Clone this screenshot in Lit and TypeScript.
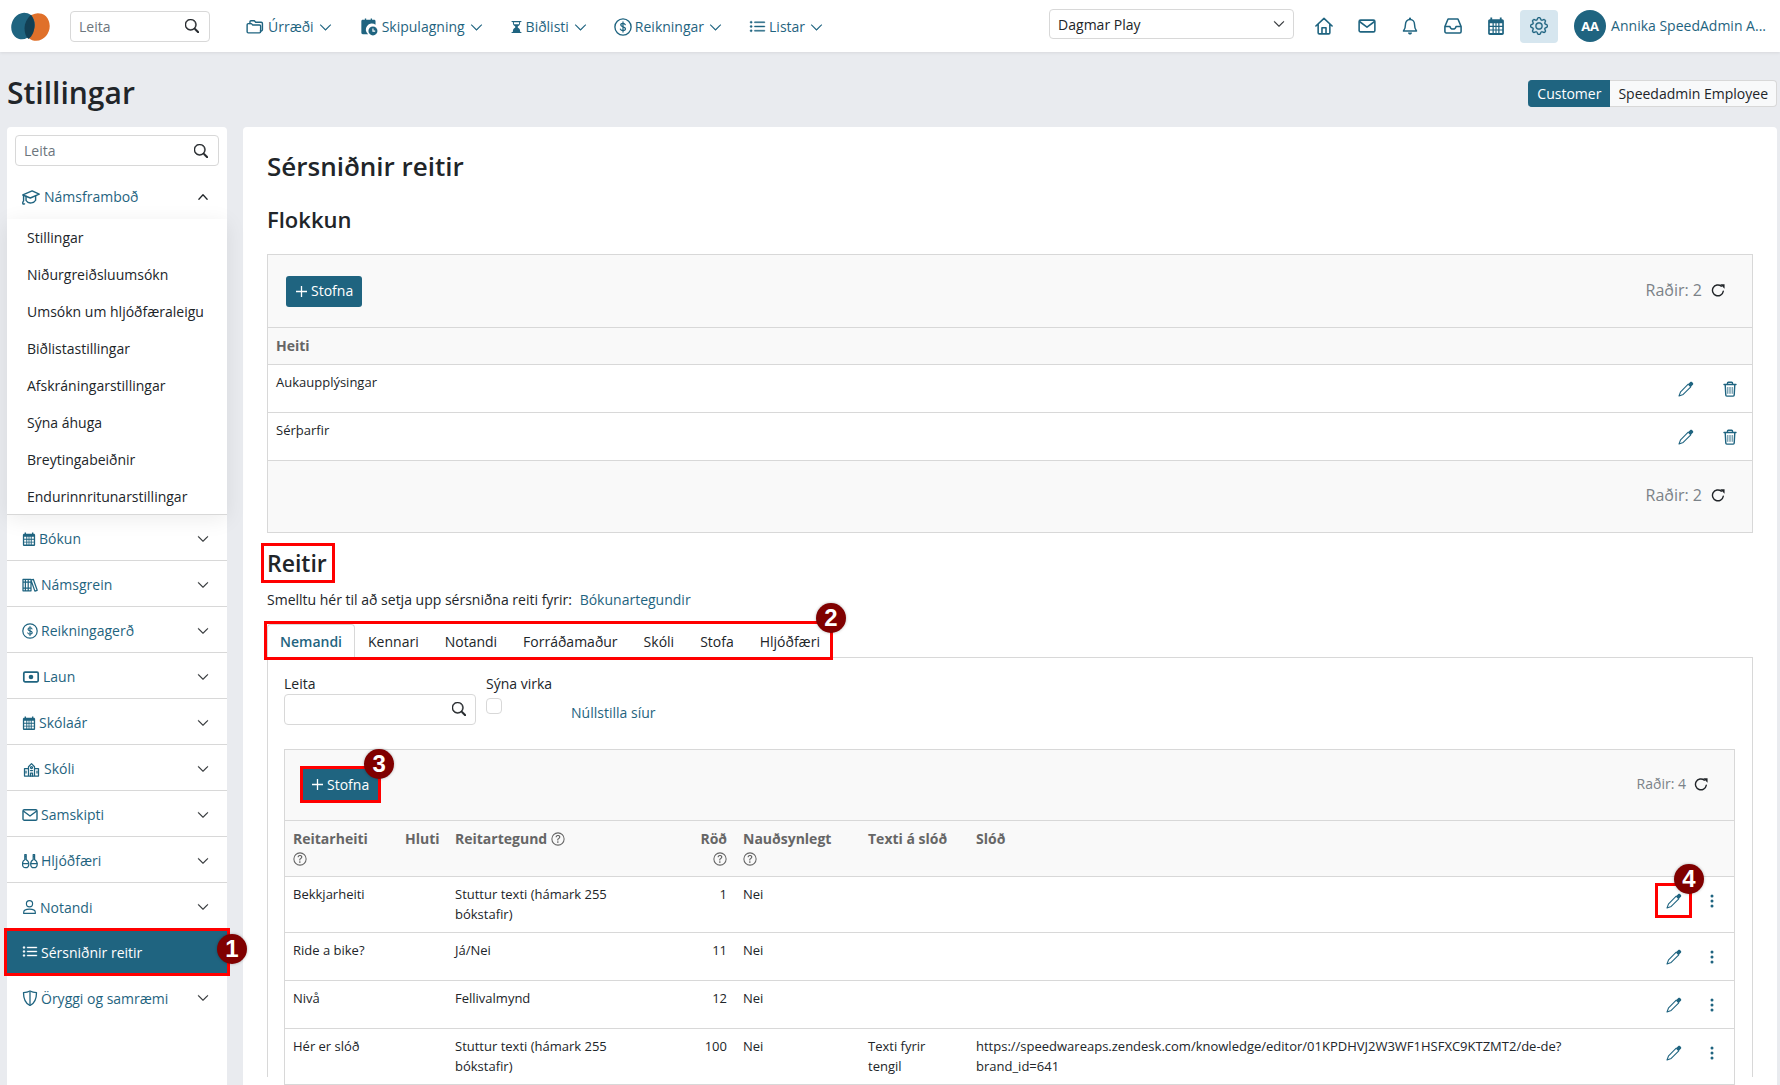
import { LitElement, html, css, svg } from "lit";
import { customElement } from "lit/decorators.js";

const line = (content: unknown) => svg`<g fill="none" stroke="currentColor" stroke-width="1.25" stroke-linecap="round" stroke-linejoin="round">${content}</g>`;

const ICONS: Record<string, unknown> = {
	search: svg`<path fill="currentColor" stroke="currentColor" stroke-width=".6" d="M11.742 10.344a6.5 6.5 0 1 0-1.397 1.398h-.001c.03.04.062.078.098.115l3.85 3.85a1 1 0 0 0 1.415-1.414l-3.85-3.85a1.007 1.007 0 0 0-.115-.1zM12 6.5a5.5 5.5 0 1 1-11 0 5.5 5.5 0 0 1 11 0z"/>`,
	down: svg`<path fill="currentColor" stroke="currentColor" stroke-width=".6" d="M1.646 4.646a.5.5 0 0 1 .708 0L8 10.293l5.646-5.647a.5.5 0 0 1 .708.708l-6 6a.5.5 0 0 1-.708 0l-6-6a.5.5 0 0 1 0-.708z"/>`,
	up: svg`<path fill="none" stroke="currentColor" stroke-width="1.7" stroke-linecap="round" stroke-linejoin="round" d="M2.5 11 8 5l5.5 6"/>`,
	list: svg`<path fill="currentColor" stroke="currentColor" stroke-width=".4" d="M5 11.5a.5.5 0 0 1 .5-.5h9a.5.5 0 0 1 0 1h-9a.5.5 0 0 1-.5-.5zm0-4a.5.5 0 0 1 .5-.5h9a.5.5 0 0 1 0 1h-9a.5.5 0 0 1-.5-.5zm0-4a.5.5 0 0 1 .5-.5h9a.5.5 0 0 1 0 1h-9a.5.5 0 0 1-.5-.5zm-3 1a1 1 0 1 0 0-2 1 1 0 0 0 0 2zm0 4a1 1 0 1 0 0-2 1 1 0 0 0 0 2zm0 4a1 1 0 1 0 0-2 1 1 0 0 0 0 2z"/>`,
	hourglass: svg`<path fill="currentColor" d="M2.5 15.5a.7.7 0 1 1 0-1.4h1V13a4.5 4.5 0 0 1 2.557-4.06c.29-.139.443-.377.443-.59v-.7c0-.213-.154-.451-.443-.59A4.5 4.5 0 0 1 3.5 3V1.9h-1a.7.7 0 0 1 0-1.4h11a.7.7 0 0 1 0 1.4h-1V3a4.5 4.5 0 0 1-2.557 4.06c-.29.139-.443.377-.443.59v.7c0 .213.154.451.443.59A4.5 4.5 0 0 1 12.5 13v1.100h1a.7.7 0 0 1 0 1.4zM4.800 2v1c0 .537.12 1.045.337 1.5h5.726c.216-.455.337-.963.337-1.500V2z"/><path fill="currentColor" d="M4.800 14v-1c0-1.400.8-2.700 2-3.300l1.200-.7 1.200.7c1.200.6 2 1.900 2 3.300v1z"/>`,
	gear: svg`<path fill="currentColor" stroke="currentColor" stroke-width=".25" d="M8 4.754a3.246 3.246 0 1 0 0 6.492 3.246 3.246 0 0 0 0-6.492zM5.754 8a2.246 2.246 0 1 1 4.492 0 2.246 2.246 0 0 1-4.492 0z"/><path fill="currentColor" stroke="currentColor" stroke-width=".25" d="M9.796 1.343c-.527-1.79-3.065-1.79-3.592 0l-.094.319a.873.873 0 0 1-1.255.52l-.292-.16c-1.64-.892-3.433.902-2.54 2.541l.159.292a.873.873 0 0 1-.52 1.255l-.319.094c-1.79.527-1.79 3.065 0 3.592l.319.094a.873.873 0 0 1 .52 1.255l-.16.292c-.892 1.64.901 3.434 2.541 2.54l.292-.159a.873.873 0 0 1 1.255.52l.094.319c.527 1.79 3.065 1.79 3.592 0l.094-.319a.873.873 0 0 1 1.255-.52l.292.16c1.64.893 3.434-.902 2.54-2.541l-.159-.292a.873.873 0 0 1 .52-1.255l.319-.094c1.79-.527 1.79-3.065 0-3.592l-.319-.094a.873.873 0 0 1-.52-1.255l.16-.292c.893-1.64-.902-3.433-2.541-2.54l-.292.159a.873.873 0 0 1-1.255-.52l-.094-.319zm-2.633.283c.246-.835 1.428-.835 1.674 0l.094.319a1.873 1.873 0 0 0 2.693 1.115l.291-.16c.764-.415 1.6.42 1.184 1.185l-.159.292a1.873 1.873 0 0 0 1.116 2.692l.318.094c.835.246.835 1.428 0 1.674l-.319.094a1.873 1.873 0 0 0-1.115 2.693l.16.291c.415.764-.42 1.6-1.185 1.184l-.291-.159a1.873 1.873 0 0 0-2.693 1.116l-.094.318c-.246.835-1.428.835-1.674 0l-.094-.319a1.873 1.873 0 0 0-2.692-1.115l-.292.16c-.764.415-1.6-.42-1.184-1.185l.159-.291A1.873 1.873 0 0 0 1.945 8.93l-.319-.094c-.835-.246-.835-1.428 0-1.674l.319-.094A1.873 1.873 0 0 0 3.06 4.377l-.16-.292c-.415-.764.42-1.6 1.185-1.184l.292.159a1.873 1.873 0 0 0 2.692-1.115l.094-.319z"/>`,
	help: svg`<circle cx="8" cy="8" r="7" fill="none" stroke="currentColor" stroke-width="1.2"/><path fill="currentColor" d="M5.255 5.786a.237.237 0 0 0 .241.247h.825c.138 0 .248-.113.266-.25.09-.656.54-1.134 1.342-1.134.686 0 1.314.343 1.314 1.168 0 .635-.374.927-.965 1.371-.673.489-1.206 1.06-1.168 1.987l.003.217a.25.25 0 0 0 .25.246h.811a.25.25 0 0 0 .25-.25v-.105c0-.718.273-.927 1.01-1.486.609-.463 1.244-.977 1.244-2.056 0-1.511-1.276-2.241-2.673-2.241-1.267 0-2.655.59-2.75 2.286zm1.557 5.763c0 .533.425.927 1.01.927.609 0 1.028-.394 1.028-.927 0-.552-.42-.94-1.029-.94-.584 0-1.009.388-1.009.94z"/>`,
	refresh: svg`<path fill="none" stroke="currentColor" stroke-width="1.6" stroke-linecap="round" d="M14 9.500A6.200 6.200 0 1 1 11.800 3.600"/><path fill="currentColor" d="M10.500 1.500h5v5z"/>`,
	pencil: svg`<g fill="none" stroke="currentColor" stroke-width="1.05" stroke-linecap="round" stroke-linejoin="round"><path d="M10.200 3.200 2.600 10.800 1 15l4.200-1.600 7.600-7.600"/></g><path fill="currentColor" d="M9.800 3.600 12.300 1.100c.5-.5 1.200-.5 1.700 0l.9.900c.5.500.5 1.200 0 1.700l-2.500 2.500z"/>`,
	trash: svg`<g fill="none" stroke="currentColor" stroke-width="1.4" stroke-linecap="round" stroke-linejoin="round"><path d="M2 3.500h12M5.500 3.300V2c0-.5.3-.8.8-.8h3.400c.5 0 .8.300.8.800v1.300M3.200 3.500l.6 10.600c0 .6.500 1 1 1h6.400c.5 0 1-.4 1-1l.6-10.600"/></g><path fill="none" stroke="currentColor" stroke-width="1" opacity=".65" d="M5.600 6v6.800M7.200 6v6.800M8.800 6v6.800M10.400 6v6.800"/>`,
	dots: svg`<path fill="currentColor" d="M9.500 13a1.500 1.500 0 1 1-3 0 1.500 1.500 0 0 1 3 0zm0-5a1.500 1.500 0 1 1-3 0 1.500 1.500 0 0 1 3 0zm0-5a1.500 1.500 0 1 1-3 0 1.500 1.500 0 0 1 3 0z"/>`,
	folders: line(svg`<path d="M3.500 5V3.400c0-.5.400-.9.900-.9h3l1.200 1.300h5c.6 0 1 .4 1 1v5.700c0 .6-.4 1-1 1h-.8"/><path d="M1 6c0-.6.400-1 1-1h2.800l1.200 1.200h6c.6 0 1 .4 1 1v5c0 .6-.4 1-1 1H2c-.6 0-1-.4-1-1z"/>`),
	planner: svg`<path fill="currentColor" d="M2.500 1.500h1.800V.5h1.200v1h4v-1h1.200v1h1.800c.8 0 1.300.5 1.300 1.300v3.300a5 5 0 0 0-6.600 8.400H2.500c-.8 0-1.300-.5-1.300-1.300V2.800c0-.8.500-1.300 1.300-1.300z"/><circle cx="11.500" cy="11.500" r="4" fill="currentColor"/><path stroke="#fff" stroke-width="1" fill="none" d="M11.500 9.300v2.400h2"/>`,
	dollar: svg`<circle cx="8" cy="8" r="7.200" fill="none" stroke="currentColor" stroke-width="1.2"/><path fill="none" stroke="currentColor" stroke-width="1.1" stroke-linecap="round" d="M10 5.900C9.600 5 8.900 4.800 8 4.800c-1.200 0-2 .6-2 1.500 0 2 4.200 1.100 4.200 3.300 0 1-.9 1.600-2.200 1.600-1.100 0-1.900-.4-2.300-1.300M8 3.500v9"/>`,
	house: svg`<g fill="none" stroke="currentColor" stroke-width="1.4" stroke-linecap="round" stroke-linejoin="round"><path d="M.8 8 8 1.200 15.200 8M2.800 6.300V14c0 .6.400 1 1 1h8.400c.6 0 1-.4 1-1V6.300M6.200 15V9.500h3.600V15"/></g>`,
	mail: svg`<g fill="none" stroke="currentColor" stroke-width="1.4" stroke-linejoin="round"><rect x="1" y="2.800" width="14" height="10.400" rx="1.300"/><path d="M1.300 4 8 9l6.700-5"/></g>`,
	bell: svg`<g fill="none" stroke="currentColor" stroke-width="1.3" stroke-linejoin="round"><path d="M8 2.200c-2.600 0-4 2-4 4.300 0 3-.8 4.700-1.800 6h11.600c-1-1.300-1.800-3-1.800-6 0-2.300-1.400-4.300-4-4.300z"/></g><circle cx="8" cy="1.500" r="1" fill="currentColor"/><path fill="currentColor" d="M6.200 13.800h3.600c0 1.100-.8 1.800-1.800 1.800s-1.800-.7-1.800-1.800z"/>`,
	inbox: svg`<g fill="none" stroke="currentColor" stroke-width="1.4" stroke-linecap="round" stroke-linejoin="round"><path d="M3.600 1.800h8.800l2.800 6.700v4.400c0 .7-.5 1.300-1.200 1.300H2c-.7 0-1.200-.6-1.200-1.300V8.500zM1 8.500h4.300c.3 1.500 1.300 2.200 2.700 2.200s2.400-.7 2.700-2.200H15"/></g>`,
	calendar: svg`<path fill="currentColor" fill-rule="evenodd" d="M3 .5h1.600v1.500h6.800V.5H13V2h.5c.8 0 1.500.7 1.500 1.500v11c0 .8-.7 1.500-1.500 1.500h-11C1.700 16 1 15.300 1 14.500v-11C1 2.700 1.700 2 2.500 2H3zM2.500 5.500v2.300h2.400V5.500zm3.500 0v2.300h1.500V5.500zm2.500 0v2.300H10V5.500zm2.600 0v2.300h2.400V5.500zM2.500 8.800v2.200h2.400V8.800zm3.500 0v2.200h1.500V8.800zm2.500 0v2.200H10V8.800zm2.600 0v2.200h2.400V8.800zM2.500 12v2.300h2.400V12zm3.500 0v2.300h1.500V12zm2.500 0v2.300H10V12zm2.600 0v2.300h2.400V12z"/>`,
	cap: line(svg`<path d="M.7 6.200 9 2.600l6.300 2.900-7.900 3.400z"/><path d="M3.600 7.300v3.800c1 1.700 2.900 2.400 4.800 2.100 1.700-.2 3-1 3.700-2.300V7"/><path d="M1.400 6.400v5.200M1.400 11.600c-.9.700-.9 2.200-.4 2.700.7 0 1-.1 1.200-.2"/>`),
	books: line(svg`<path d="M1 2.300h2.400v11.500H1zM3.400 2.300h2.800v11.500H3.400zM6.200 2.300h2.800v11.500H6.200zM9 3.200l2.300-.9 3.900 11-2.300.8zM1 5h8M1 11h8"/>`),
	cash: svg`<rect x=".8" y="3.200" width="14.400" height="9.600" rx="1.200" fill="none" stroke="currentColor" stroke-width="1.7"/><circle cx="8" cy="8" r="2.300" fill="currentColor"/>`,
	school: line(svg`<path d="M5 5.800 8 2.600l3 3.200V15H5zM5 7.500H1v7.500h4M11 7.500h4v7.500h-4"/><circle cx="8" cy="6.500" r="1"/><path d="M7 15v-3h2v3M2.500 10v2M13.500 10v2M7 9.600h2"/>`),
	instruments: line(svg`<path d="M2.800 1.500h1.400v5.200c1.300.6 2.600 2 2.600 4.200 0 2.300-1.300 3.800-3.300 3.800s-3-1.500-3-3.800c0-2.200 1-3.600 2.300-4.200zM11.200 1.500h1.400v5.200c1.300.6 2.600 2 2.600 4.200 0 2.300-1.300 3.800-3.300 3.800s-3.200-1.500-3.200-3.800c0-2.200 1.200-3.600 2.500-4.200zM2.800 3.500h1.400M11.200 3.500h1.400"/><path d="M1 10.500h5M9 10.500h6"/>`),
	person: line(svg`<circle cx="8" cy="4.500" r="3.300"/><path d="M1.800 14.800v-1.300c0-2.100 1.900-3.300 6.200-3.300s6.200 1.200 6.200 3.300v1.300z"/>`),
	shield: svg`<path fill="none" stroke="currentColor" stroke-width="1.3" stroke-linejoin="round" d="M8 1c2.200 1.100 4.300 1.500 6.500 1.700 0 6.500-1.500 10.500-6.500 12.800C3 13.200 1.500 9.200 1.500 2.700 3.700 2.500 5.800 2.100 8 1z"/><path fill="none" stroke="currentColor" stroke-width="1.3" d="M8 1.500v13.500"/>`,
};

const icon = (name: string, cls = "", w?: number) =>
	html`<svg class="ic ${cls}" style=${w ? `width:${w}px` : ""} viewBox="0 0 16 16" aria-hidden="true">${ICONS[name]}</svg>`;

const TOP_NAV = [
	{ ic: "folders", w: 20, label: "Úrræði" },
	{ ic: "planner", w: 20, label: "Skipulagning" },
	{ ic: "hourglass", w: 13, label: "Biðlisti" },
	{ ic: "dollar", w: 18, label: "Reikningar" },
	{ ic: "list", w: 17, label: "Listar" },
];
const TOP_ICONS = ["house", "mail", "bell", "inbox", "calendar", "gear"];
const SUB_ITEMS = [
	"Stillingar",
	"Niðurgreiðsluumsókn",
	"Umsókn um hljóðfæraleigu",
	"Biðlistastillingar",
	"Afskráningarstillingar",
	"Sýna áhuga",
	"Breytingabeiðnir",
	"Endurinnritunarstillingar",
];
const SIDE_ITEMS = [
	{ ic: "calendar", w: 14, label: "Bókun" },
	{ ic: "books", w: 16, label: "Námsgrein" },
	{ ic: "dollar", w: 16, label: "Reikningagerð" },
	{ ic: "cash", w: 18, label: "Laun" },
	{ ic: "calendar", w: 14, label: "Skólaár" },
	{ ic: "school", w: 19, label: "Skóli" },
	{ ic: "mail", w: 16, label: "Samskipti" },
	{ ic: "instruments", w: 16, label: "Hljóðfæri" },
	{ ic: "person", w: 15, label: "Notandi" },
];
const TABS = ["Nemandi", "Kennari", "Notandi", "Forráðamaður", "Skóli", "Stofa", "Hljóðfæri"];
const URL_TEXT = "https://speedwareaps.zendesk.com/knowledge/editor/01KPDHVJ2W3WF1HSFXC9KTZMT2/de-de?brand_id=641";
const FIELD_ROWS = [
	{ name: "Bekkjarheiti", type: "Stuttur texti (hámark 255 bókstafir)", order: "1", req: "Nei", text: "", url: "" },
	{ name: "Ride a bike?", type: "Já/Nei", order: "11", req: "Nei", text: "", url: "" },
	{ name: "Nivå", type: "Fellivalmynd", order: "12", req: "Nei", text: "", url: "" },
	{ name: "Hér er slóð", type: "Stuttur texti (hámark 255 bókstafir)", order: "100", req: "Nei", text: "Texti fyrir tengil", url: URL_TEXT },
];

@customElement("app-root")
export class AppRoot extends LitElement {
	static styles = css`
		:host {
			display: block;
			height: 1085px;
			overflow: hidden;
			background: #e9ebef;
			color: #212529;
			font-family: "Open Sans", sans-serif;
			font-size: 14px;
			--primary: #1f6480;
			--line: #d8d8d8;
		}
		* {
			box-sizing: border-box;
		}
		.ic {
			width: 16px;
			height: 16px;
			flex: none;
			display: block;
		}
		a {
			color: var(--primary);
		}

		/* Top bar */
		.topbar {
			height: 52px;
			background: #fff;
			display: flex;
			align-items: center;
			padding: 0 14px 0 11px;
			box-shadow: 0 1px 3px rgba(0, 0, 0, 0.08);
			position: relative;
		}
		.logo {
			width: 39px;
			height: 29px;
			flex: none;
		}
		.search {
			display: flex;
			align-items: center;
			background: #fff;
			border: 1px solid var(--line);
			border-radius: 4px;
			height: 31px;
			padding: 0 10px 0 8px;
		}
		.search input {
			border: 0;
			outline: 0;
			flex: 1;
			min-width: 0;
			padding: 0;
			font: inherit;
			color: #212529;
			background: none;
		}
		.search input::placeholder {
			color: #6c757d;
		}
		.search .ic {
			width: 14px;
			height: 14px;
			color: #212529;
		}
		.top-search {
			width: 140px;
			margin-left: 20px;
		}
		.top-nav {
			display: flex;
			margin-left: 35px;
			gap: 27px;
			padding-top: 2px;
		}
		.top-item {
			display: flex;
			align-items: center;
			gap: 3px;
			color: var(--primary);
			line-height: 20px;
		}
		.top-item .ic {
			height: 18px;
		}
		.top-item .chev {
			width: 13px;
			height: 13px;
			margin-left: 2px;
		}
		.top-right {
			margin-left: auto;
			display: flex;
			align-items: center;
		}
		.org {
			width: 245px;
			height: 30px;
			border: 1px solid var(--line);
			border-radius: 4px;
			display: flex;
			align-items: center;
			justify-content: space-between;
			padding: 0 8px;
			margin-right: 11px;
			margin-top: -4px;
		}
		.org .ic {
			width: 12px;
			height: 12px;
		}
		.top-icons {
			display: flex;
			gap: 5px;
		}
		.top-btn {
			width: 38px;
			height: 33px;
			border-radius: 4px;
			display: flex;
			align-items: center;
			justify-content: center;
			color: var(--primary);
		}
		.top-btn .ic {
			width: 18px;
			height: 18px;
		}
		.top-btn.on {
			background: #d6e6ef;
		}
		.avatar {
			width: 32px;
			height: 32px;
			border-radius: 50%;
			background: var(--primary);
			color: #fff;
			font-weight: 700;
			font-size: 13px;
			display: flex;
			align-items: center;
			justify-content: center;
			margin-left: 16px;
		}
		.user {
			color: var(--primary);
			margin: -2px 0 0 5px;
			white-space: nowrap;
		}

		/* Page title */
		.title-row {
			height: 75px;
			display: flex;
			align-items: center;
			justify-content: space-between;
			padding: 7px 3px 0 7px;
		}
		.title-row h1 {
			margin: 0;
			font-size: 30px;
			font-weight: 600;
			line-height: 36px;
			color: #212529;
		}
		.switch {
			display: flex;
			height: 27px;
			line-height: 25px;
		}
		.switch span {
			padding: 0 8px;
			border: 1px solid var(--line);
			background: #f8f9fa;
			border-radius: 0 4px 4px 0;
			border-left: 0;
		}
		.switch .on {
			background: var(--primary);
			border-color: var(--primary);
			color: #fff;
			border-radius: 4px 0 0 4px;
			font-weight: 500;
			padding-left: 9px;
		}

		.body {
			display: flex;
			gap: 16px;
			padding: 0 3px 0 7px;
		}

		/* Sidebar */
		.sidebar {
			width: 220px;
			flex: none;
			height: 958px;
			background: #fff;
			border-radius: 4px 4px 0 0;
		}
		.side-search {
			margin: 8px 8px 0;
		}
		.side-head {
			height: 53px;
			padding: 8px 18px 0 15px;
			display: flex;
			align-items: center;
			color: var(--primary);
			gap: 4px;
		}
		.side-head .ic:first-child {
			height: 18px;
		}
		.side-head .chev {
			margin-left: auto;
			width: 12px;
			height: 12px;
			color: #212529;
		}
		.sub {
			background: #fff;
			box-shadow: 0 4px 20px rgba(0, 0, 0, 0.08);
			border-bottom: 1px solid var(--line);
			height: 296px;
			position: relative;
		}
		.sub div {
			height: 37px;
			padding-left: 20px;
			display: flex;
			align-items: center;
		}
		.side-item {
			height: 46px;
			padding: 2px 18px 0 15px;
			display: flex;
			align-items: center;
			color: var(--primary);
			gap: 3px;
			border-bottom: 1px solid var(--line);
		}
		.side-item .chev {
			margin-left: auto;
			width: 12px;
			height: 12px;
			color: #212529;
		}
		.side-item.last {
			border-bottom: 0;
		}
		.side-item.active {
			background: var(--primary);
			color: #fff;
			height: 42px;
			border-bottom: 0;
			margin: 2px 0 1px;
			padding-top: 0;
		}

		/* Highlights */
		.mark {
			position: relative;
			outline: 3px solid #f00;
		}
		.badge {
			position: absolute;
			width: 30px;
			height: 30px;
			border-radius: 50%;
			background: #800000;
			color: #fff;
			font: 700 24px/30px "Liberation Sans", sans-serif;
			text-align: center;
			z-index: 2;
			box-shadow: 0 0 3px rgba(0, 0, 0, 0.3);
		}
		.badge-1 {
			right: -20px;
			top: 3px;
		}
		.badge-2 {
			right: -16px;
			top: -21px;
		}
		.badge-3 {
			right: -16px;
			top: -20px;
		}
		.badge-4 {
			right: -15px;
			top: -22px;
		}

		/* Main */
		.main {
			flex: 1;
			min-width: 0;
			height: 958px;
			background: #fff;
			border-radius: 4px 4px 0 0;
			padding: 25px 24px 0;
		}
		.main h2 {
			margin: 0;
			font-size: 26px;
			line-height: 29px;
			font-weight: 600;
		}
		.main h3 {
			margin: 25px 0 22px;
			font-size: 22px;
			line-height: 26px;
			font-weight: 600;
		}
		.panel {
			border: 1px solid var(--line);
		}
		.bar {
			height: 72px;
			background: #f9f9f9;
			display: flex;
			align-items: center;
			justify-content: space-between;
			padding: 0 27px 0 18px;
		}
		.btn {
			display: inline-flex;
			align-items: center;
			gap: 3px;
			height: 31px;
			padding: 0 9px;
			background: var(--primary);
			color: #fff;
			border-radius: 3px;
			line-height: 1;
		}
		.btn.mark {
			border-radius: 0;
			padding-left: 8px;
			margin-left: 1px;
		}
		.btn svg {
			width: 13px;
			height: 13px;
		}
		.count {
			display: flex;
			align-items: center;
			gap: 9px;
			color: #7b8288;
			font-size: 16px;
			margin-top: -2px;
		}
		.count .ic {
			width: 14px;
			height: 14px;
			color: #212529;
		}
		table {
			width: 100%;
			border-collapse: collapse;
			table-layout: fixed;
			font-size: 13px;
			line-height: 20px;
		}
		th {
			background: #f9f9f9;
			border-top: 1px solid var(--line);
			color: #666;
			font-weight: 700;
			text-align: left;
			padding: 8px;
			vertical-align: top;
			font-size: 14px;
		}
		td {
			border-top: 1px solid var(--line);
			padding: 8px;
			vertical-align: top;
		}
		.simple td {
			height: 47.5px;
			padding-top: 7px;
		}
		.simple td.acts {
			padding: 16px 0 0;
		}
		.acts-in {
			display: flex;
			justify-content: flex-end;
			gap: 28px;
			padding-right: 14px;
			color: var(--primary);
		}
		.bar.foot {
			border-top: 1px solid var(--line);
			height: 72px;
			justify-content: flex-end;
		}
		.reitir {
			display: inline-block;
			margin: 13px 0 0 -3px;
			line-height: 34px;
			font-size: 23px;
			font-weight: 600;
			padding: 0 5px 0 3px;
			vertical-align: top;
		}
		.hint {
			margin: 10px 0 0;
			line-height: 20px;
		}
		.hint a {
			margin-left: 4px;
		}
		.tabs {
			display: flex;
			margin-top: 14px;
			height: 33px;
			position: relative;
			z-index: 1;
		}
		.tabs-in {
			display: flex;
			height: 33px;
			width: 563px;
		}
		.tab {
			padding: 0 12px;
			line-height: 33px;
			border: 1px solid transparent;
			border-bottom: 0;
			white-space: nowrap;
		}
		.tab.on {
			color: var(--primary);
			font-weight: 600;
			background: #fff;
			border-color: var(--line);
			border-radius: 4px 4px 0 0;
			height: 34px;
		}
		.tab-body {
			border: 1px solid var(--line);
			border-bottom: 0;
			padding: 16px 17px 0 16px;
			height: 420px;
		}
		.filters {
			display: flex;
			align-items: flex-start;
			height: 75px;
		}
		.field label {
			display: block;
			line-height: 20px;
		}
		.field .search {
			width: 192px;
			padding-right: 9px;
		}
		.check-field {
			margin-left: 10px;
		}
		.check {
			width: 16px;
			height: 16px;
			margin-top: 4px;
			border: 1px solid var(--line);
			border-radius: 4px;
		}
		.reset {
			margin: 29px 0 0 19px;
			line-height: 20px;
		}
		.fields .bar {
			height: 70px;
			padding: 0 26px 0 17px;
		}
		.fields .count {
			font-size: 14px;
			gap: 8px;
		}
		.fields td.r,
		.fields th.r {
			text-align: right;
		}
		.fields td.type {
			padding-right: 40px;
		}
		.qm {
			width: 14px;
			height: 14px;
			display: inline-block;
			vertical-align: -2px;
			color: #666;
		}
		.qm.solo {
			display: block;
			margin-top: 3px;
		}
		.qm.solo.end {
			margin-left: auto;
		}
		.fields td {
			font-size: 13px;
			padding-top: 7px;
			padding-bottom: 7px;
		}
		.fields td.acts {
			padding: 16px 0 0;
		}
		.fields tr.tall td {
			height: 56px;
		}
		.fields tr.low td {
			height: 48px;
		}
		.fields th {
			height: 56px;
			line-height: 20px;
		}
		.fields .acts-in {
			gap: 22px;
			padding-right: 14px;
		}
		.edit-wrap {
			position: relative;
			width: 16px;
			height: 16px;
		}
		.edit-mark {
			position: absolute;
			left: -11px;
			top: -10px;
			width: 37px;
			height: 35px;
			border: 3px solid #f00;
		}
	`;

	private header() {
		return html`
			<header class="topbar">
				<svg class="logo" viewBox="0 0 39 29" aria-hidden="true">
					<ellipse fill="#e0702a" cx="26" cy="15" rx="12.500" ry="14" transform="rotate(20 26 15)" />
					<ellipse fill="#1f6480" cx="12" cy="14" rx="11.500" ry="13.500" transform="rotate(20 12 14)" />
					<path fill="#123f54" d="M20 2.500C16 7 13.500 11 13.500 16c0 5 1.500 9 4 11 4-3 6-8 6-14 0-4-1.500-7-3.500-10.500z" />
				</svg>
				<div class="search top-search"><input placeholder="Leita" />${icon("search")}</div>
				<nav class="top-nav">
					${TOP_NAV.map((n) => html`<div class="top-item">${icon(n.ic, "", n.w)}<span>${n.label}</span>${icon("down", "chev")}</div>`)}
				</nav>
				<div class="top-right">
					<div class="org"><span>Dagmar Play</span>${icon("down")}</div>
					<div class="top-icons">
						${TOP_ICONS.map((n) => html`<div class="top-btn ${n === "gear" ? "on" : ""}">${icon(n)}</div>`)}
					</div>
					<div class="avatar">AA</div>
					<span class="user">Annika SpeedAdmin A...</span>
				</div>
			</header>
		`;
	}

	private sidebar() {
		return html`
			<aside class="sidebar">
				<div class="search side-search"><input placeholder="Leita" />${icon("search")}</div>
				<div class="side-head">${icon("cap", "", 18)}<span>Námsframboð</span>${icon("up", "chev")}</div>
				<div class="sub">${SUB_ITEMS.map((s) => html`<div>${s}</div>`)}</div>
				${SIDE_ITEMS.map(
					(s, i) => html`<div class="side-item ${i === SIDE_ITEMS.length - 1 ? "last" : ""}">${icon(s.ic, "", s.w)}<span>${s.label}</span>${icon("down", "chev")}</div>`,
				)}
				<div class="side-item active mark">${icon("list")}<span>Sérsniðnir reitir</span><span class="badge badge-1">1</span></div>
				<div class="side-item last">${icon("shield", "", 16)}<span>Öryggi og samræmi</span>${icon("down", "chev")}</div>
			</aside>
		`;
	}

	private count(n: number) {
		return html`<div class="count"><span>Raðir: ${n}</span>${icon("refresh")}</div>`;
	}

	private plus() {
		return html`<svg viewBox="0 0 13 13" aria-hidden="true"><path stroke="currentColor" stroke-width="1.3" d="M6.500 1v11M1 6.500h11" /></svg>`;
	}

	private groupPanel() {
		return html`
			<div class="panel">
				<div class="bar"><span class="btn">${this.plus()}Stofna</span>${this.count(2)}</div>
				<table class="simple">
					<colgroup><col /><col style="width:120px" /></colgroup>
					<thead><tr><th colspan="2">Heiti</th></tr></thead>
					<tbody>
						${["Aukaupplýsingar", "Sérþarfir"].map(
							(n) => html`<tr><td>${n}</td><td class="acts"><div class="acts-in">${icon("pencil")}${icon("trash")}</div></td></tr>`,
						)}
					</tbody>
				</table>
				<div class="bar foot">${this.count(2)}</div>
			</div>
		`;
	}

	private fieldsPanel() {
		const qm = (cls = "") => html`<svg class="qm ${cls}" viewBox="0 0 16 16" aria-hidden="true">${ICONS.help}</svg>`;
		return html`
			<div class="panel fields">
				<div class="bar">
					<span class="btn mark">${this.plus()}Stofna<span class="badge badge-3">3</span></span>
					${this.count(4)}
				</div>
				<table>
					<colgroup>
						<col style="width:112px" />
						<col style="width:50px" />
						<col style="width:244px" />
						<col style="width:44px" />
						<col style="width:125px" />
						<col style="width:108px" />
						<col style="width:640px" />
						<col />
					</colgroup>
					<thead>
						<tr>
							<th>Reitarheiti ${qm("solo")}</th>
							<th>Hluti</th>
							<th>Reitartegund ${qm()}</th>
							<th class="r">Röð ${qm("solo end")}</th>
							<th>Nauðsynlegt ${qm("solo")}</th>
							<th>Texti á slóð</th>
							<th>Slóð</th>
							<th></th>
						</tr>
					</thead>
					<tbody>
						${FIELD_ROWS.map(
							(r, i) => html`
								<tr class="${r.type.length > 20 ? "tall" : "low"}">
									<td>${r.name}</td>
									<td></td>
									<td class="type">${r.type}</td>
									<td class="r">${r.order}</td>
									<td>${r.req}</td>
									<td>${r.text}</td>
									<td>${r.url}</td>
									<td class="acts">
										<div class="acts-in">
											<div class="edit-wrap">
												${i === 0 ? html`<span class="edit-mark"><span class="badge badge-4">4</span></span>` : ""}
												${icon("pencil")}
											</div>
											${icon("dots")}
										</div>
									</td>
								</tr>
							`,
						)}
					</tbody>
				</table>
			</div>
		`;
	}

	private content() {
		return html`
			<main class="main">
				<h2>Sérsniðnir reitir</h2>
				<h3>Flokkun</h3>
				${this.groupPanel()}
				<div class="reitir mark">Reitir</div>
				<p class="hint">Smelltu hér til að setja upp sérsniðna reiti fyrir: <a>Bókunartegundir</a></p>
				<div class="tabs">
					<div class="tabs-in mark">
						${TABS.map((t, i) => html`<div class="tab ${i === 0 ? "on" : ""}">${t}</div>`)}
						<span class="badge badge-2">2</span>
					</div>
				</div>
				<div class="tab-body">
					<div class="filters">
						<div class="field">
							<label>Leita</label>
							<div class="search"><input />${icon("search")}</div>
						</div>
						<div class="field check-field">
							<label>Sýna virka</label>
							<div class="check"></div>
						</div>
						<a class="reset">Núllstilla síur</a>
					</div>
					${this.fieldsPanel()}
				</div>
			</main>
		`;
	}

	render() {
		return html`
			${this.header()}
			<div class="title-row">
				<h1>Stillingar</h1>
				<div class="switch"><span class="on">Customer</span><span>Speedadmin Employee</span></div>
			</div>
			<div class="body">${this.sidebar()}${this.content()}</div>
		`;
	}
}
